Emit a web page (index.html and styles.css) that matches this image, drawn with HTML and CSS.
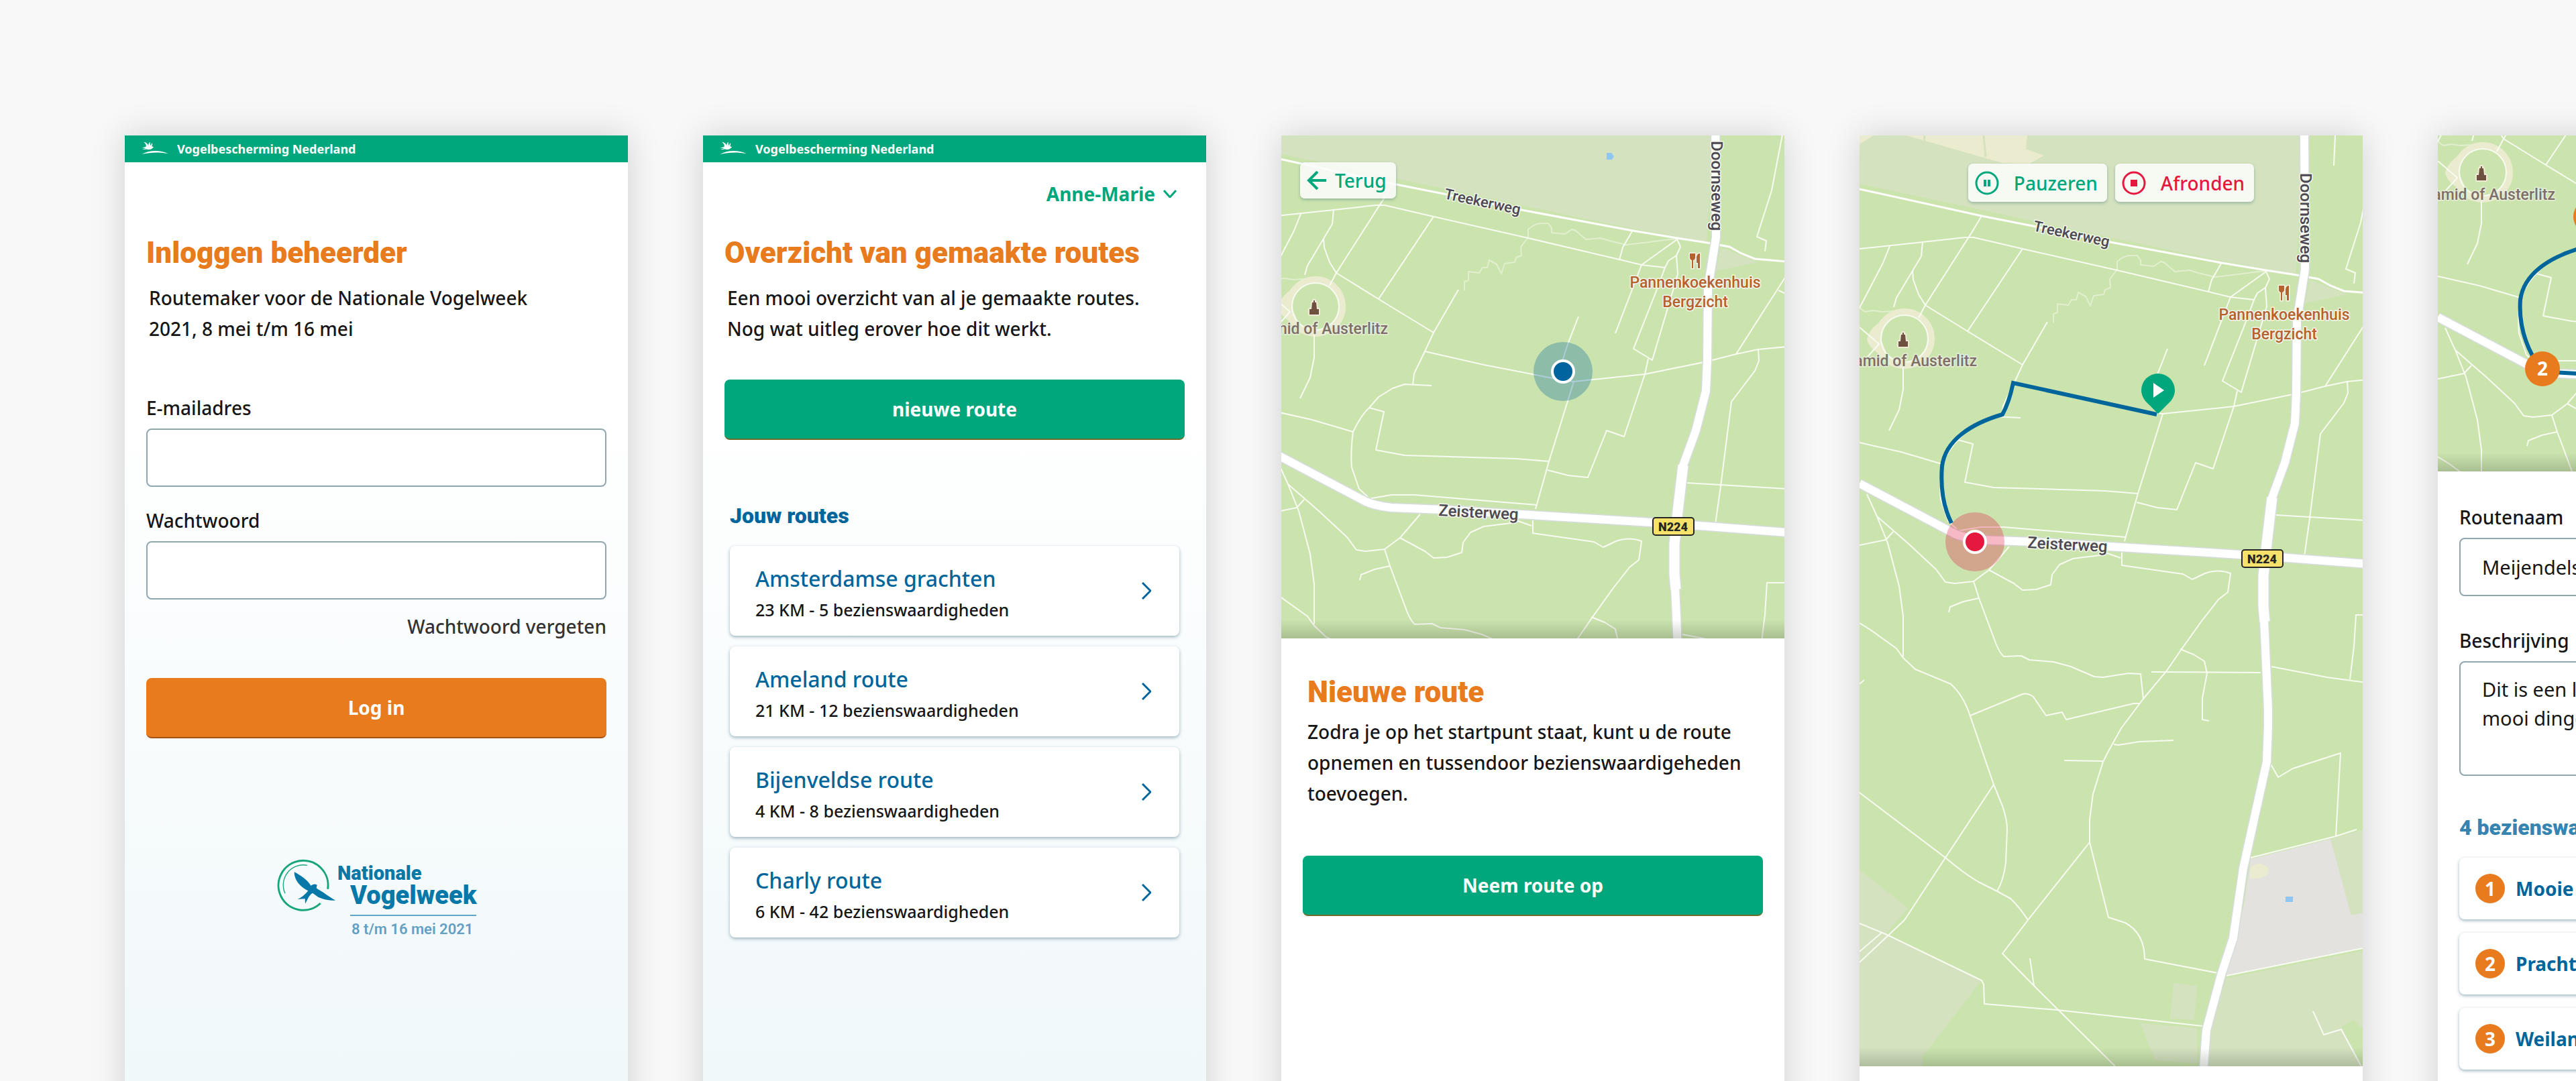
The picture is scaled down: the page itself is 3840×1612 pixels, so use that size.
FILE: index.html
```html
<!DOCTYPE html>
<html lang="nl">
<head>
<meta charset="utf-8">
<meta name="viewport" content="width=device-width, initial-scale=1">
<title>Routemaker – Nationale Vogelweek</title>
<link rel="stylesheet" href="styles.css">
</head>
<body>

<svg class="sprite" aria-hidden="true">
  <symbol id="heron" viewBox="0 0 180 102">
    <path d="M27 17C38 18 48 26 52 35C50 26 54 20 60 17L58 24C60 30 62 32 63 36L67 21C72 26 71 32 67 38L77 42L68 50C61 55 53 56 44 53L20 54L38 48L18 45L38 41C42 33 37 25 27 17z"/>
    <path d="M18 78C50 59 105 54 149 75C110 66 60 67 18 78z"/>
  </symbol>
  <symbol id="chevron" viewBox="0 0 14 26"><path d="M1 1l12 12L1 25" fill="none" stroke="currentColor" stroke-width="3"/></symbol>
  <symbol id="map" viewBox="0 0 770 1388" overflow="visible">
    <rect width="770" height="1388" fill="#cbe4ae"/>
    <g fill="#d4e2c0">
      <path d="M0 0H663L650 207L525 184L182 111L0 72z"/>
      <path d="M671 215L727 237L664 250z"/>
      <path d="M0 1095L72 1152L39 1191L182 1260L93 1375L95 1388H0z"/>
      <path d="M468 1264L503 1268L499 1319L463 1317zM419 1324L503 1331V1384L440 1379z"/>
      <path d="M547 1257L770 1212V1388H513L520 1334z"/>
      <path d="M702 1049L770 1030V1155L733 1163z"/>
    </g>
    <path d="M718 1329L736 1319L770 1350V1388H750z" fill="#cbe4ae"/>
    <path d="M583 1079L702 1049L733 1163L770 1155V1208L547 1253L572 1152z" fill="#e4e2df"/>
    <g fill="#ebebcf">
      <path d="M70 0L213 41L253 42L275 30L248 20L250 0zM0 0H21L0 13z"/>
      <path d="M582 1106V1095Q584 1086 598 1086Q612 1090 609 1100Q602 1110 582 1108z"/>
      <path d="M36 274Q14 288 11 304Q14 320 44 334L32 304z"/>
    </g>
    <path d="M185 0L188 32M97 0L96 10" stroke="#d4e2c0" stroke-width="3"/>
    <circle cx="67" cy="303" r="40" fill="none" stroke="#ebebcf" stroke-width="10"/>
    <g fill="#8fc7f2">
      <path d="M501 74h7l4 5-3 5h-8z"/>
      <path d="M635 1135h11v8h-11z"/>
    </g>
    <g class="map-stream">
      <path d="M289 279L289 266L295 264L295 251L311 253L316 245L323 245L326 234L337 240L344 254L349 239L364 237L366 230L374 227L373 215L377 209L384 200L384 188Q394 179 404 179L414 179L419 186L419 193L439 195L449 188L455 190L470 203L492 201L505 205L530 211L565 207L586 204L606 202"/>
      <path d="M0 257L8 263L20 261L34 263L50 262"/>
    </g>
    <g class="map-path">
      <circle cx="67" cy="303" r="35"/>
      <path d="M0 169L94 159L157 152L170 152L243 169L384 201L520 233L553 241L588 245L593 235L605 227"/>
      <path d="M182 120L167 145L98 253L88 272M243 169L161 292M45 165L35 190L0 257"/>
      <path d="M94 159L92 180L79 202L55 242L51 256M79 202L80 215L88 237L98 253L161 292L243 342"/>
      <path d="M280 278L243 342L230 370L214 403L212 420"/>
      <path d="M230 370L318 390L436 413L452 415L558 404L651 385L694 374L727 367L770 363"/>
      <path d="M240 421L200 419L182 425L161 438L147 454Q135 465 123 490Q119 520 121 543L132 575L145 587"/>
      <path d="M147 454L169 460L157 517L200 525L366 530L415 534M0 458L62 472L123 490"/>
      <path d="M145 590L180 584L215 584L397 599"/>
      <path d="M459 318L443 359L436 381L434 404M452 415L443 444L415 534L395 605"/>
      <path d="M413 547L444 555L473 558L501 488L527 497L558 404L563 381"/>
      <path d="M514 343L553 241L606 203M588 245L575 280L541 366L569 383L607 255L605 227L611 214L606 203M539 191L525 215L520 233"/>
      <path d="M770 10L747 130L725 199L739 205L737 221M709 0L707 45"/>
      <path d="M770 255L694 374M757 279L770 285M727 367L728 384L722 399L687 445L671 571L663 628M621 566L770 575"/>
      <path d="M11 535L26 568L42 608L59 672L65 717V777M26 568L72 608L114 647L128 666L142 668L170 665L193 648L223 613"/>
      <path d="M0 611L39 603L50 591M0 286L29 311L12 330"/>
      <path d="M193 648L230 668L243 678L263 677L285 670L287 655L298 640L318 631L359 626L369 623L389 630"/>
      <path d="M391 615V641L482 654L496 662L515 653Q535 646 553 653L549 681L535 692L510 724L480 766L458 798L423 840L390 884L370 920L363 934L348 982L343 1020V1054L371 1166L396 1174Q425 1190 425 1228L534 1249"/>
      <path d="M170 665L178 690L203 757Q209 772 215 777L241 776L253 782L289 785L315 792L350 807L363 808L401 802L419 803L423 840"/>
      <path d="M178 690L155 695L135 703L133 711"/>
      <path d="M0 727L16 737L55 765L65 779L83 796L136 818Q155 835 165 866L200 968L213 1000Q220 1020 220 1035L218 1084Q215 1110 205 1127"/>
      <path d="M165 865L243 833Q251 831 259 837L278 865L302 860L308 871L409 847H418"/>
      <path d="M478 766L498 774L514 784L518 802L511 839V871L521 873M435 800L598 801"/>
      <path d="M614 792L697 808L770 818M731 811L737 762L740 715L766 715"/>
      <path d="M379 908L386 909L417 904L468 902M305 932L363 933"/>
      <path d="M0 980L128 1077Q155 1100 177 1113L205 1127L225 1138Q238 1150 251 1170"/>
      <path d="M200 968L128 1077L67 1170L0 1233M343 1054L251 1170L213 1220L260 1268L381 1388M254 1227L260 1268"/>
      <path d="M0 1175L39 1191L182 1260L185 1266L186 1295L294 1304L511 1328M0 1217L34 1188"/>
      <path d="M612 936L624 957L646 944L717 921L710 1045M583 1077L710 1045L741 1035"/>
      <path d="M547 1253L770 1208M676 1306L692 1341L718 1333L750 1392M0 818L7 812"/>
      <path d="M65 344V379L59 409L44 440"/>
    </g>
    <path class="map-street" d="M0 80L182 120L258 135L374 159L540 190L606 201L651 208L684 214L702 224L722 232L770 236"/>
    <g class="map-road map-road-casing">
      <path d="M0 519L142 594Q155 600 180 603L258 606L389 614L600 627L770 640"/>
      <path d="M663 0L664 200L652 275L651 384L649 429L634 488L615 540L607 608L602 657V702L604 743L609 857V880L607 934L590 1011L572 1093L557 1197L539 1252L517 1334L513 1390"/>
    </g>
    <path class="map-road-wide map-road-casing" d="M615 540L607 608L602 657V702L604 725"/>
    <g class="map-road">
      <path d="M0 519L142 594Q155 600 180 603L258 606L389 614L600 627L770 640"/>
      <path d="M663 0L664 200L652 275L651 384L649 429L634 488L615 540L607 608L602 657V702L604 743L609 857V880L607 934L590 1011L572 1093L557 1197L539 1252L517 1334L513 1390"/>
    </g>
    <path class="map-road-wide" d="M615 540L607 608L602 657V702L604 725"/>
    <g class="map-label">
      <text transform="translate(258 142) rotate(12)">Treekerweg</text>
      <text transform="translate(657 56) rotate(90)" class="map-label-major">Doornseweg</text>
      <text transform="translate(250 615) rotate(3)" class="map-label-major">Zeisterweg</text>
    </g>
    <g class="map-label map-label-place">
      <text x="175" y="344" text-anchor="end">Pyramid of Austerlitz</text>
    </g>
    <g class="map-label map-label-food">
      <text x="633" y="275" text-anchor="middle">Pannenkoekenhuis</text>
      <text x="633" y="304" text-anchor="middle">Bergzicht</text>
    </g>
    <path d="M58 315v-8h3l1-10h2v-3h2v3h2l1 10h3v8z" fill="#6f5140" stroke="#f0ead8" stroke-width="4" stroke-linejoin="round" paint-order="stroke"/>
    <g fill="#b5622f" stroke="#f4f4e4" stroke-width="3" paint-order="stroke">
      <path d="M637 246v-8h-2v-9q1-5 5-5v22z"/>
      <path d="M625 224h8v6q0 3-3 4v12h-2v-12q-3-1-3-4z"/>
    </g>
    <rect x="570" y="618" width="61" height="26" rx="4" fill="#f6e26b" stroke="#262626" stroke-width="2"/>
    <text x="600" y="638" text-anchor="middle" class="map-shield">N224</text>
  </symbol>
</svg>

<main class="board">

  <section class="screen screen-tint" aria-label="Inloggen">
    <header class="brand"><svg class="brand-bird" aria-hidden="true"><use href="#heron"/></svg>Vogelbescherming Nederland</header>
    <div class="account-row"></div>
    <form class="content">
      <h1 class="title">Inloggen beheerder</h1>
      <p class="intro">Routemaker voor de Nationale Vogelweek<br>2021, 8 mei t/m 16 mei</p>
      <div class="fields">
        <div class="field"><label for="email">E-mailadres</label><input class="box" id="email" type="email"></div>
        <div class="field"><label for="password">Wachtwoord</label><input class="box" id="password" type="password"></div>
      </div>
      <a class="forgot" href="#">Wachtwoord vergeten</a>
      <button class="action action-login" type="button">Log in</button>
    </form>
    <svg class="logo" viewBox="0 0 310 124" role="img" aria-label="Nationale Vogelweek">
      <g transform="scale(.3333)">
        <path d="M248 152A111 111 0 1 0 215 216" fill="none" stroke="#17a57c" stroke-width="9"/>
        <path d="M156 46A90 90 0 0 0 57 172" fill="none" stroke="#17a57c" stroke-width="4"/>
        <path d="M98 76C125 90 158 112 172 137L180 133Q190 127 200 134L197 148L205 154C225 163 255 190 283 203C255 204 225 198 205 188L180 170C163 180 158 198 147 218L146 196Q132 196 113 198Q140 186 160 160C135 148 98 120 98 76z" fill="#0878a8"/>
      </g>
      <text x="97" y="37" class="logo-name">Nationale</text>
      <text x="116" y="73" class="logo-week">Vogelweek</text>
      <path d="M116 90H304" stroke="#5da5c9" stroke-width="2"/>
      <text x="118" y="118" class="logo-date">8 t/m 16 mei 2021</text>
    </svg>
  </section>

  <section class="screen screen-tint" aria-label="Overzicht">
    <header class="brand"><svg class="brand-bird" aria-hidden="true"><use href="#heron"/></svg>Vogelbescherming Nederland</header>
    <div class="account-row"><button class="account" type="button">Anne-Marie<svg class="account-chevron" viewBox="0 0 20 12" aria-hidden="true"><path d="M1 1l9 10 9-10" fill="none" stroke="currentColor" stroke-width="3"/></svg></button></div>
    <div class="content">
      <h1 class="title">Overzicht van gemaakte routes</h1>
      <p class="intro">Een mooi overzicht van al je gemaakte routes.<br>Nog wat uitleg erover hoe dit werkt.</p>
      <button class="action action-new" type="button">nieuwe route</button>
      <div class="routes">
        <h2 class="subtitle">Jouw routes</h2>
        <a class="card" href="#"><span class="card-text"><span class="card-name">Amsterdamse grachten</span><span class="card-meta">23 KM - 5 bezienswaardigheden</span></span><svg class="card-chevron" aria-hidden="true"><use href="#chevron"/></svg></a>
        <a class="card" href="#"><span class="card-text"><span class="card-name">Ameland route</span><span class="card-meta">21 KM - 12 bezienswaardigheden</span></span><svg class="card-chevron" aria-hidden="true"><use href="#chevron"/></svg></a>
        <a class="card" href="#"><span class="card-text"><span class="card-name">Bijenveldse route</span><span class="card-meta">4 KM - 8 bezienswaardigheden</span></span><svg class="card-chevron" aria-hidden="true"><use href="#chevron"/></svg></a>
        <a class="card" href="#"><span class="card-text"><span class="card-name">Charly route</span><span class="card-meta">6 KM - 42 bezienswaardigheden</span></span><svg class="card-chevron" aria-hidden="true"><use href="#chevron"/></svg></a>
      </div>
    </div>
  </section>

  <section class="screen" aria-label="Nieuwe route">
    <div class="map">
      <svg class="map-view" viewBox="16 48 750 750">
        <use href="#map" width="770" height="1388"/>
        <circle cx="436" cy="400" r="44" fill="#00659e" fill-opacity=".3"/>
        <circle cx="436" cy="400" r="16" fill="#00659e" stroke="#fff" stroke-width="4"/>
      </svg>
      <button class="chip chip-back" type="button"><svg width="30" height="28" viewBox="0 0 30 28" aria-hidden="true"><path d="M16 1L3 14l13 13M3 14h26" fill="none" stroke="currentColor" stroke-width="4"/></svg>Terug</button>
    </div>
    <div class="content content-start">
      <div class="start-text">
        <h1 class="title">Nieuwe route</h1>
        <p>Zodra je op het startpunt staat, kunt u de route<br>opnemen en tussendoor bezienswaardigeheden<br>toevoegen.</p>
      </div>
      <button class="action action-start" type="button">Neem route op</button>
    </div>
  </section>

  <section class="screen" aria-label="Route opnemen">
    <div class="map">
      <svg class="map-view" viewBox="0 0 750 1388">
        <use href="#map" width="770" height="1388"/>
        <path class="track" d="M443 416L229 369Q223 398 213 416C165 430 128 455 123 493Q119 542 137 578"/>
        <path d="M445 415L426 396Q420 388 420 380A25 25 0 0 1 470 380Q470 388 464 396z" fill="#00a77d"/>
        <path d="M438 369L454 380L438 391z" fill="#fff"/>
        <circle cx="172" cy="606" r="44" fill="#e5183f" fill-opacity=".3"/>
        <circle cx="172" cy="606" r="16" fill="#e5183f" stroke="#fff" stroke-width="4"/>
      </svg>
      <div class="controls">
        <button class="chip" type="button"><svg width="36" height="36" viewBox="0 0 36 36" aria-hidden="true"><circle cx="18" cy="18" r="16" fill="none" stroke="currentColor" stroke-width="3"/><path d="M13 13h4v10h-4zM19 13h4v10h-4z" fill="currentColor"/></svg>Pauzeren</button>
        <button class="chip chip-stop" type="button"><svg width="36" height="36" viewBox="0 0 36 36" aria-hidden="true"><circle cx="18" cy="18" r="16" fill="none" stroke="currentColor" stroke-width="3"/><path d="M13 13h10v10h-10z" fill="currentColor"/></svg>Afronden</button>
      </div>
    </div>
  </section>

  <section class="screen" aria-label="Route bewerken">
    <div class="map">
      <svg class="map-view" viewBox="0 248 750 501">
        <use href="#map" width="770" height="1388"/>
        <path class="track" d="M443 416L229 369Q223 398 213 416C165 430 128 455 123 493Q119 550 156 600L389 614"/>
        <circle cx="228" cy="369" r="26" fill="#e77b1d"/>
        <circle cx="156" cy="596" r="26" fill="#e77b1d"/>
        <text x="156" y="606" text-anchor="middle" class="stop-number">2</text>
      </svg>
    </div>
    <form class="content content-edit">
      <div class="field"><label for="name">Routenaam</label><input class="box" id="name" type="text" value="Meijendelse duinen"></div>
      <div class="field field-about"><label for="about">Beschrijving</label><textarea class="box box-tall" id="about">Dit is een leuke route met
mooi dingen</textarea></div>
      <h2 class="subtitle subtitle-sights">4 bezienswaardigheden</h2>
      <ol class="sights">
        <li class="sight"><span class="badge">1</span>Mooie plek</li>
        <li class="sight"><span class="badge">2</span>Prachtig uitzicht</li>
        <li class="sight"><span class="badge">3</span>Weiland</li>
      </ol>
    </form>
  </section>

</main>
</body>
</html>
```
FILE: styles.css
```css
:root {
  --green: #00a77d;
  --orange: #e77b1d;
  --blue: #00659b;
  --red: #e5183f;
  --ink: #161616;
  --line: #90a7b2;
}

* { box-sizing: border-box; }

body {
  margin: 0;
  background: #f8f8f8;
  color: var(--ink);
  font: 500 28px/46px "Noto Sans", "Open Sans", sans-serif;
}

h1, h2, p, ol { margin: 0; }
button, input, textarea { font: inherit; color: inherit; }
button { border: 0; cursor: pointer; }
a { color: inherit; text-decoration: none; }

.sprite { position: absolute; width: 0; height: 0; }

/* Artboards side by side, running off the right and bottom edges */
.board {
  display: flex;
  gap: 112px;
  height: 100vh;
  padding: 202px 0 0 186px;
  overflow: hidden;
}

.screen {
  flex: none;
  width: 750px;
  min-height: 1624px;
  background: #fff;
  box-shadow: 0 0 48px rgba(0, 0, 0, .16);
}

.screen-tint { background: linear-gradient(#fff 400px, #f0f8fa 1440px); }

/* Brand bar */
.brand {
  display: flex;
  align-items: center;
  gap: 4px;
  height: 40px;
  padding-left: 20px;
  background: var(--green);
  color: #fff;
  font-size: 18px;
  font-weight: 700;
}
.brand-bird { width: 54px; height: 34px; fill: #fff; }

.account-row {
  display: flex;
  justify-content: flex-end;
  align-items: flex-start;
  height: 109px;
  padding: 24px 44px 0 0;
}
.account {
  display: flex;
  align-items: center;
  gap: 12px;
  padding: 0;
  background: none;
  color: var(--green);
  font-weight: 700;
}
.account-chevron { width: 20px; height: 12px; }

.content { display: flex; flex-direction: column; padding: 0 32px; }

.title {
  color: var(--orange);
  font: 900 44px/52px Roboto, "Noto Sans", sans-serif;
}
.subtitle {
  color: var(--blue);
  font: 900 32px/40px Roboto, "Noto Sans", sans-serif;
}
.intro { margin: 18px 0 0 4px; }

/* Forms */
.fields { display: flex; flex-direction: column; gap: 30px; margin-top: 75px; }
.field { display: flex; flex-direction: column; gap: 11px; line-height: 40px; }
.box {
  width: 100%;
  height: 87px;
  padding: 0 32px;
  border: 2px solid var(--line);
  border-radius: 8px;
  background: #fff;
  outline: 0;
  font-size: 29px;
  font-weight: 400;
}
.box-tall { display: block; height: 171px; padding: 18px 32px; line-height: 43px; resize: none; overflow: hidden; }
.forgot { align-self: flex-end; margin-top: 20px; color: #333; line-height: 40px; }

.action {
  height: 90px;
  border-bottom: 2px solid #6f6c2c;
  border-radius: 8px;
  background: var(--green);
  color: #fff;
  font-weight: 700;
}
.action-login { margin-top: 57px; border-color: #a35414; background: var(--orange); }
.action-new { margin-top: 53px; }
.action-start { margin-top: 70px; }

.logo { display: block; width: 310px; height: 124px; margin: 174px auto 0; }
.logo-name { fill: #0878a8; font: 900 29px Roboto, sans-serif; }
.logo-week { fill: #0878a8; font: 900 38px Roboto, sans-serif; }
.logo-date { fill: #62a0c4; font: 600 22px Roboto, sans-serif; }

/* Route cards */
.routes { display: flex; flex-direction: column; gap: 16px; margin-top: 93px; padding: 0 8px; }
.routes .subtitle { margin-bottom: 9px; }
.card {
  display: flex;
  align-items: center;
  justify-content: space-between;
  height: 134px;
  padding: 0 42px 0 38px;
  border-radius: 8px;
  background: #fff;
  box-shadow: 0 2px 5px rgba(40, 90, 110, .45);
}
.card-text { display: flex; flex-direction: column; gap: 4px; padding-top: 8px; }
.card-name { color: var(--blue); font-size: 32px; line-height: 44px; }
.card-meta { font-size: 25px; line-height: 40px; }
.card-chevron { width: 14px; height: 26px; color: var(--blue); }

/* Maps */
.map { position: relative; }
.map::after {
  content: "";
  position: absolute;
  inset: auto 0 0;
  height: 28px;
  background: linear-gradient(transparent, rgba(60, 70, 50, .24));
}
.map-view { display: block; width: 100%; }
.map-path, .map-stream { fill: none; stroke: #f8fbf2; stroke-width: 2; stroke-linejoin: round; }
.map-stream { stroke: #e1efcf; }
.map-street { fill: none; stroke: #fff; stroke-width: 3; }
.map-road { fill: none; stroke: #fff; stroke-width: 12; stroke-linejoin: round; }
.map-road-wide { fill: none; stroke: #fff; stroke-width: 15; stroke-linejoin: round; }
.map-road.map-road-casing { stroke: #d6dcdc; stroke-width: 15; }
.map-road-wide.map-road-casing { stroke: #d6dcdc; stroke-width: 18; }
.map-label {
  fill: #4b4852;
  stroke: #f2f6ea;
  stroke-width: 3;
  stroke-linejoin: round;
  paint-order: stroke;
  font: 500 22px Roboto, sans-serif;
}
.map-label-major { font-size: 24px; }
.map-label-place { fill: #7d6e68; font-size: 23px; stroke: #e6eed8; }
.map-label-food { fill: #b5622f; font-size: 23px; }
.map-shield { fill: #262626; font: 900 18px Roboto, sans-serif; }
.track { fill: none; stroke: #00659b; stroke-width: 6; }
.stop-number { fill: #fff; font: 700 28px "Noto Sans", sans-serif; }

.chip {
  display: flex;
  align-items: center;
  gap: 22px;
  height: 57px;
  padding: 0 14px 0 10px;
  border-radius: 7px;
  background: rgba(252, 252, 250, .87);
  box-shadow: 0 2px 4px rgba(60, 110, 110, .4);
  color: var(--green);
}
.chip-back { position: absolute; top: 40px; left: 28px; gap: 12px; height: 54px; }
.chip-stop { color: var(--red); }
.controls { position: absolute; top: 42px; left: 0; right: 0; display: flex; justify-content: center; gap: 12px; }

.content-start { padding-top: 54px; }
.start-text { display: flex; flex-direction: column; gap: 10px; padding-left: 7px; }

/* Route editor */
.content-edit { padding-top: 48px; }
.field-about { margin-top: 46px; }
.subtitle-sights { margin-top: 57px; color: #3585b0; }
.sights { display: flex; flex-direction: column; gap: 20px; margin-top: 25px; padding: 0; list-style: none; }
.sight {
  display: flex;
  align-items: center;
  gap: 16px;
  height: 92px;
  padding: 0 24px;
  border-radius: 8px;
  background: #fff;
  box-shadow: 0 2px 5px rgba(40, 90, 110, .45);
  color: var(--blue);
  font-weight: 700;
}
.badge {
  width: 44px;
  border-radius: 50%;
  background: var(--orange);
  color: #fff;
  line-height: 44px;
  text-align: center;
}
```
